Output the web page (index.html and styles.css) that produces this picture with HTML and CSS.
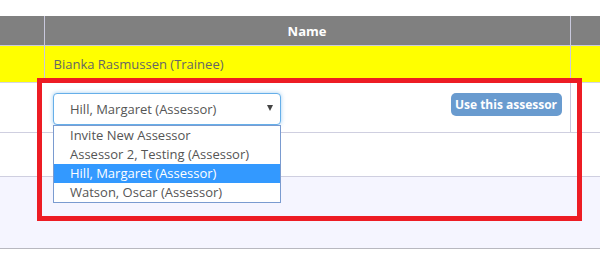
FILE: index.html
```html
<!DOCTYPE html>
<html>
<head>
<meta charset="utf-8">
<link rel="stylesheet" href="styles.css">
</head>
<body>
<div class="page">
  <table class="grid">
    <colgroup>
      <col class="c1"><col class="c2"><col class="c3">
    </colgroup>
    <thead>
      <tr class="head"><th></th><th>Name</th><th></th></tr>
    </thead>
    <tbody>
      <tr class="trainee"><td></td><td>Bianka Rasmussen (Trainee)</td><td></td></tr>
      <tr class="pick">
        <td colspan="2" class="pickcell">
          <div class="pickrow">
            <div class="selectwrap">
              <div class="select"><span>Hill, Margaret (Assessor)</span><i class="arrow"></i></div>
              <ul class="menu">
                <li>Invite New Assessor</li>
                <li>Assessor 2, Testing (Assessor)</li>
                <li class="hl">Hill, Margaret (Assessor)</li>
                <li>Watson, Oscar (Assessor)</li>
              </ul>
            </div>
            <button class="use">Use this assessor</button>
          </div>
        </td>
        <td></td>
      </tr>
      <tr class="blank"><td colspan="3"></td></tr>
      <tr class="lav"><td colspan="3"></td></tr>
    </tbody>
  </table>
  <div class="highlight"></div>
</div>
</body>
</html>
```
FILE: styles.css
```css
html, body {
  margin: 0;
  padding: 0;
  background: #fff;
}
body {
  font-family: "Open Sans", "Liberation Sans", sans-serif;
  font-size: 13px;
  color: #555;
}
.page {
  position: relative;
  width: 600px;
  height: 254px;
  padding-top: 16px;
  box-sizing: border-box;
  overflow: hidden;
}
.grid {
  width: 600px;
  border-collapse: collapse;
  table-layout: fixed;
}
.c1 { width: 44px; }
.c2 { width: 526px; }
.c3 { width: 30px; }
.grid td, .grid th {
  padding: 0;
}
.head th {
  height: 29px;
  background: #808080;
  color: #fff;
  font-weight: 700;
  font-size: 13px;
  border-left: 1px solid #c9c9dd;
  border-bottom: 1px solid #c9c9dd;
  padding: 0;
}
.head th:first-child { border-left: none; }
.trainee td {
  height: 36px;
  background: #ffff00;
  color: #666;
  border-left: 1px solid #c9c9dd;
}
.trainee td:first-child { border-left: none; }
.trainee td:nth-child(2) { padding-left: 9px; }
.pick td {
  height: 49px;
  border-top: 1px solid #d4d4e4;
  border-bottom: 1px solid #cfcfe0;
}
.pick td:last-child { border-left: 1px solid #c9c9dd; }
.pickcell {
  vertical-align: top;
}
.pickrow {
  display: flex;
  align-items: flex-start;
  justify-content: space-between;
  padding: 10px 8px 0 53px;
}
.selectwrap {
  position: relative;
  width: 228px;
}
.select {
  height: 32px;
  box-sizing: border-box;
  border: 1px solid #66afe9;
  border-radius: 4px;
  box-shadow: 0 0 4px rgba(102, 175, 233, 0.6);
  display: flex;
  align-items: center;
  justify-content: space-between;
  padding: 0 7px 0 16px;
  color: #555;
  background: #fff;
}
.arrow {
  width: 0;
  height: 0;
  border-left: 3.5px solid transparent;
  border-right: 3.5px solid transparent;
  border-top: 6px solid #444;
  margin-bottom: 2px;
}
.menu {
  position: absolute;
  left: 0;
  top: 32px;
  width: 228px;
  box-sizing: border-box;
  margin: 0;
  padding: 0;
  list-style: none;
  border: 1px solid #7a9bd0;
  background: #fff;
  z-index: 2;
}
.menu li {
  height: 19px;
  line-height: 19px;
  padding-left: 16px;
  color: #555;
  white-space: nowrap;
}
.menu li.hl {
  background: #3399ff;
  color: #fff;
}
.use {
  margin-top: 0;
  height: 23px;
  width: 111px;
  padding: 0;
  border: none;
  border-radius: 5px;
  background: #699bcf;
  color: #fff;
  font-family: "Open Sans", "Liberation Sans", sans-serif;
  font-weight: 700;
  font-size: 12px;
}
.blank td {
  height: 43px;
  border-bottom: 1px solid #cfcfe0;
}
.lav td {
  height: 71px;
  background: #f5f5ff;
  border-bottom: 1px solid #b8b8c0;
}
.highlight {
  position: absolute;
  left: 37px;
  top: 78px;
  width: 545px;
  height: 143px;
  box-sizing: border-box;
  border: 5px solid #ed1c24;
  z-index: 3;
  pointer-events: none;
}
```
